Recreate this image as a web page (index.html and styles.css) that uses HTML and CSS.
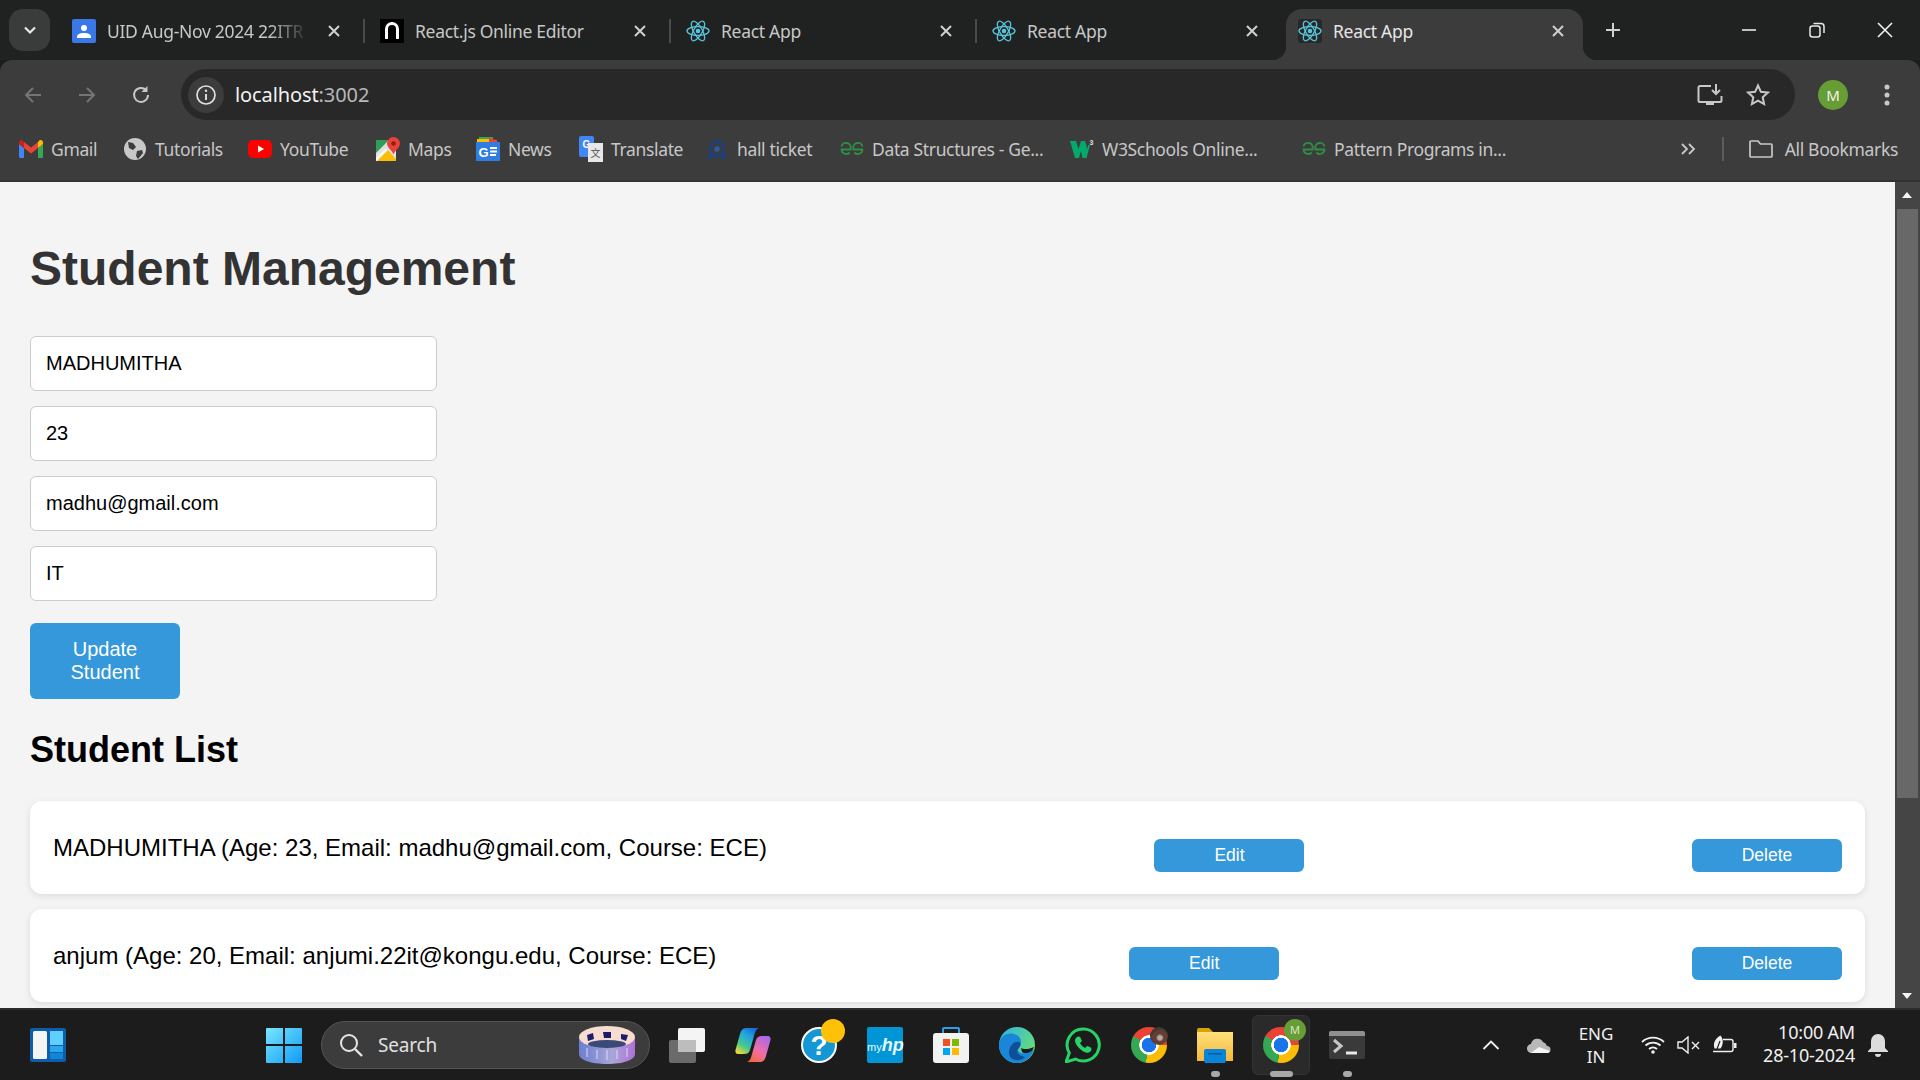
FILE: index.html
```html
<!DOCTYPE html>
<html>
<head>
    <title>React App</title>
    <link rel="stylesheet" href="styles.css">
</head>

<body>
    <!-- shared icons -->
    <svg class="defs" width="0" height="0">
        <symbol id="react" viewBox="0 0 24 24">
            <circle cx="12" cy="12" r="2.3" fill="#58c4dc"/>
            <g fill="none" stroke="#58c4dc" stroke-width="1.3">
                <ellipse cx="12" cy="12" rx="11" ry="4.3"/>
                <ellipse cx="12" cy="12" rx="11" ry="4.3" transform="rotate(60 12 12)"/>
                <ellipse cx="12" cy="12" rx="11" ry="4.3" transform="rotate(120 12 12)"/>
            </g>
        </symbol>
        <symbol id="close" viewBox="0 0 14 14">
            <path d="M2 2l10 10M12 2L2 12" stroke="#d0d0d0" stroke-width="2" fill="none"/>
        </symbol>
        <symbol id="gfg" viewBox="0 0 24 14">
            <path d="M1.5 4.5A4.6 4.6 0 0 1 10.6 6.5v1H1.6a4.6 4.6 0 0 0 8 3M22.5 4.5A4.6 4.6 0 0 0 13.4 6.5v1h9a4.6 4.6 0 0 1-8 3" fill="none" stroke="#2f8d46" stroke-width="1.9"/>
        </symbol>
    </svg>

    <div class="window">
        <div class="tabstrip">
            <button class="tab-search">
                <svg width="16" height="16" viewBox="0 0 16 16"><path d="M3 5.5l5 5 5-5" fill="none" stroke="#e8e8e8" stroke-width="2.2"/></svg>
            </button>
            <div class="tabs">
                <div class="tab sep">
                    <svg class="favicon" viewBox="0 0 24 24"><rect width="24" height="24" rx="2" fill="#3b78e7"/><circle cx="12" cy="9" r="3" fill="#fff"/><path d="M5 19v-1c0-3 3-4 7-4s7 1 7 4v1z" fill="#fff"/></svg>
                    <span class="tab-title fade">UID Aug-Nov 2024 22ITR</span>
                    <svg class="tab-close"><use href="#close"/></svg>
                </div>
                <div class="tab sep">
                    <svg class="favicon" viewBox="0 0 24 24"><rect width="24" height="24" fill="#000"/><path d="M6.5 20V10a5.5 5.5 0 0 1 11 0v10" fill="none" stroke="#fff" stroke-width="3"/></svg>
                    <span class="tab-title">React.js Online Editor</span>
                    <svg class="tab-close"><use href="#close"/></svg>
                </div>
                <div class="tab sep">
                    <svg class="favicon"><use href="#react"/></svg>
                    <span class="tab-title">React App</span>
                    <svg class="tab-close"><use href="#close"/></svg>
                </div>
                <div class="tab">
                    <svg class="favicon"><use href="#react"/></svg>
                    <span class="tab-title">React App</span>
                    <svg class="tab-close"><use href="#close"/></svg>
                </div>
                <div class="tab active">
                    <svg class="favicon dark"><use href="#react"/></svg>
                    <span class="tab-title">React App</span>
                    <svg class="tab-close"><use href="#close"/></svg>
                </div>
            </div>
            <svg class="new-tab" width="18" height="18" viewBox="0 0 18 18"><path d="M9 2v14M2 9h14" stroke="#d0d0d0" stroke-width="2"/></svg>
            <div class="win-controls">
                <svg width="16" height="16" viewBox="0 0 16 16"><path d="M1 8h14" stroke="#e8e8e8" stroke-width="1.6"/></svg>
                <svg width="16" height="16" viewBox="0 0 16 16"><rect x="1" y="4" width="10" height="11" rx="2.5" fill="none" stroke="#e8e8e8" stroke-width="1.5"/><path d="M4.5 1.5H12a3 3 0 0 1 3 3V11" fill="none" stroke="#e8e8e8" stroke-width="1.5"/></svg>
                <svg width="16" height="16" viewBox="0 0 16 16"><path d="M1 1l14 14M15 1L1 15" stroke="#f0f0f0" stroke-width="1.6"/></svg>
            </div>
        </div>

        <div class="toolbar">
            <div class="nav-buttons">
                <svg width="22" height="22" viewBox="0 0 22 22"><path d="M19 11H4M11 4l-7 7 7 7" fill="none" stroke="#757575" stroke-width="2"/></svg>
                <svg width="22" height="22" viewBox="0 0 22 22"><path d="M3 11h15M11 4l7 7-7 7" fill="none" stroke="#757575" stroke-width="2"/></svg>
                <svg width="22" height="22" viewBox="0 0 22 22"><path d="M18 11a7 7 0 1 1-2-5" fill="none" stroke="#c8c8c8" stroke-width="2"/><path d="M17.5 2v6h-6z" fill="#c8c8c8"/></svg>
            </div>
            <div class="omnibox">
                <span class="site-info">
                    <svg width="22" height="22" viewBox="0 0 22 22"><circle cx="11" cy="11" r="9" fill="none" stroke="#e0e0e0" stroke-width="1.7"/><path d="M11 10v6" stroke="#e0e0e0" stroke-width="1.9"/><circle cx="11" cy="6.8" r="1.2" fill="#e0e0e0"/></svg>
                </span>
                <span class="url">localhost<span class="url-port">:3002</span></span>
                <span class="omni-actions">
                    <svg width="26" height="24" viewBox="0 0 26 24"><path d="M14 3H3a1.5 1.5 0 0 0-1.5 1.5v13A1.500 1.500 0 0 0 3 19h20a1.500 1.500 0 0 0 1.500-1.500V13" fill="none" stroke="#c8c8c8" stroke-width="2"/><path d="M9 19h8v3H9z" fill="#c8c8c8"/><path d="M19 1v9M15 7l4 4 4-4" fill="none" stroke="#c8c8c8" stroke-width="2"/></svg>
                    <svg width="24" height="24" viewBox="0 0 24 24"><path d="M12 2.500l2.900 6.300 6.900.8-5.100 4.700 1.400 6.800-6.100-3.400-6.100 3.400 1.400-6.800L2.200 9.600l6.900-.8z" fill="none" stroke="#c8c8c8" stroke-width="2"/></svg>
                </span>
            </div>
            <span class="avatar">M</span>
            <svg class="menu-dots" width="6" height="22" viewBox="0 0 6 22"><circle cx="3" cy="3" r="2.500" fill="#c8c8c8"/><circle cx="3" cy="11" r="2.500" fill="#c8c8c8"/><circle cx="3" cy="19" r="2.500" fill="#c8c8c8"/></svg>
        </div>

        <div class="bookmarks">
            <a class="bm">
                <svg class="bm-icon" viewBox="0 0 24 20"><path d="M1 19h4V9L0 5v12.500A1.500 1.500 0 0 0 1 19z" fill="#4285f4"/><path d="M19 19h4a1 1 0 0 0 1-1.500V5l-5 4z" fill="#34a853"/><path d="M19 3v6l5-4V3.500c0-2-2.200-3-3.700-2z" fill="#fbbc04"/><path d="M5 9V3l7 5.500L19 3v6l-7 5.500z" fill="#ea4335"/><path d="M0 3.500V5l5 4V3L3.700 1.500C2.200.5 0 1.500 0 3.500z" fill="#c5221f"/></svg>
                Gmail
            </a>
            <a class="bm">
                <svg class="bm-icon" viewBox="0 0 24 24"><circle cx="12" cy="12" r="11" fill="#c8c8c8"/><path d="M5 5l5 1 3 4-3 3-4-2zM14 14l5-1 1 3-5 6-2-3z" fill="#3c3c3c"/></svg>
                Tutorials
            </a>
            <a class="bm">
                <svg class="bm-icon" viewBox="0 0 24 20"><rect y="1" width="24" height="18" rx="5" fill="#f00"/><path d="M10 6.500l6 3.500-6 3.500z" fill="#fff"/></svg>
                YouTube
            </a>
            <a class="bm">
                <svg class="bm-icon" viewBox="0 0 24 24"><path d="M0 3h20v21H0z" fill="#dfe3e8"/><path d="M0 3h13L0 16z" fill="#2f9e57"/><path d="M0 20v4h20v-2L10 11z" fill="#fbbc04"/><path d="M0 20l10-9 2 2L1 24H0z" fill="#f6f6f6"/><path d="M17.500 0A6.500 6.500 0 0 1 24 6.500c0 4-4.500 6-6.500 11-2-5-6.500-7-6.500-11A6.500 6.500 0 0 1 17.500 0z" fill="#ea4335"/><circle cx="17.500" cy="6.500" r="2.300" fill="#8e1c14"/></svg>
                Maps
            </a>
            <a class="bm">
                <svg class="bm-icon" viewBox="0 0 24 24"><path d="M3 0h14v5H3z" fill="#34a853"/><path d="M12 1l9 2v3h-9z" fill="#ea4335"/><path d="M1 2h12v4H1z" fill="#fbbc04"/><rect y="5" width="24" height="19" fill="#2f7de1"/><text x="7.500" y="19.500" class="news-g">G</text><path d="M14 11h7M14 14.500h7M14 18h6" stroke="#fff" stroke-width="2"/></svg>
                News
            </a>
            <a class="bm">
                <span class="translate-icon"><span class="translate-g">G</span><span class="translate-zh">文</span></span>
                Translate
            </a>
            <a class="bm">
                <svg class="bm-icon" viewBox="0 0 24 26"><circle cx="12" cy="13" r="7.500" fill="none" stroke="#1d3f7a" stroke-width="3"/><circle cx="12" cy="13" r="3" fill="#2a5aa8"/><path d="M12 1l2 5h-4zM1 21l6-3 2 3-4 4zM23 21l-6-3-2 3 4 4z" fill="#1d3f7a"/></svg>
                hall ticket
            </a>
            <a class="bm">
                <svg class="bm-icon"><use href="#gfg"/></svg>
                Data Structures - Ge...
            </a>
            <a class="bm">
                <svg class="bm-icon" viewBox="0 0 24 20"><path d="M0 2h6l2.500 8L11 2h4l2.500 8L18 6h2l-3.500 13h-4L11 12l-2 7H5z" fill="#04a96d"/><text x="19.500" y="6" class="w3-mark">3</text></svg>
                W3Schools Online...
            </a>
            <a class="bm">
                <svg class="bm-icon"><use href="#gfg"/></svg>
                Pattern Programs in...
            </a>
            <div class="bm-right">
                <svg width="16" height="14" viewBox="0 0 16 14"><path d="M2 2l5 5-5 5M9 2l5 5-5 5" fill="none" stroke="#c8c8c8" stroke-width="1.800"/></svg>
                <span class="bm-divider"></span>
                <a class="bm">
                    <svg class="bm-icon" viewBox="0 0 24 20"><path d="M1 3a1 1 0 0 1 1-1h7l2.500 3H22a1 1 0 0 1 1 1v11a1 1 0 0 1-1 1H2a1 1 0 0 1-1-1z" fill="none" stroke="#c8c8c8" stroke-width="1.700"/></svg>
                    All Bookmarks
                </a>
            </div>
        </div>

        <div class="viewport">
            <div class="page">
                <h1>Student Management</h1>
                <form class="student-form">
                    <input type="text" value="MADHUMITHA">
                    <input type="text" value="23">
                    <input type="text" value="madhu@gmail.com">
                    <input type="text" value="IT">
                    <button type="button" class="btn btn-big">Update Student</button>
                </form>
                <h2>Student List</h2>
                <ul class="student-list">
                    <li>
                        <span>MADHUMITHA (Age: 23, Email: madhu@gmail.com, Course: ECE)</span>
                        <button type="button" class="btn">Edit</button>
                        <button type="button" class="btn">Delete</button>
                    </li>
                    <li>
                        <span>anjum (Age: 20, Email: anjumi.22it@kongu.edu, Course: ECE)</span>
                        <button type="button" class="btn">Edit</button>
                        <button type="button" class="btn">Delete</button>
                    </li>
                    <li></li>
                </ul>
            </div>
            <div class="scrollbar">
                <span class="arrow-up"></span>
                <span class="thumb"></span>
                <span class="arrow-down"></span>
            </div>
        </div>

        <div class="taskbar">
            <svg class="task-icon" viewBox="0 0 36 36"><rect y="1" width="36" height="34" rx="2" fill="#0f5cab"/><rect x="3" y="4" width="14" height="28" rx="1.500" fill="#f4f4f4"/><rect x="20" y="4" width="13" height="14" fill="#5fd0fb"/><rect x="20" y="19" width="13" height="6" fill="#28a8ea"/><rect x="20" y="26" width="13" height="6" fill="#0f86d8"/></svg>
            <svg class="start-icon" viewBox="0 0 36 36"><defs><linearGradient id="win" x1="0" y1="0" x2="1" y2="1"><stop offset="0" stop-color="#78e6ff"/><stop offset="1" stop-color="#0f9bf5"/></linearGradient></defs><path d="M1 1h16v16H0V2a1 1 0 0 1 1-1zM19 1h16a1 1 0 0 1 1 1v15H19zM0 19h17v17H1a1 1 0 0 1-1-1zM19 19h17v16a1 1 0 0 1-1 1H19z" fill="url(#win)"/></svg>
            <div class="search-pill">
                <svg width="24" height="24" viewBox="0 0 24 24"><circle cx="10" cy="10" r="8" fill="none" stroke="#e6e6e6" stroke-width="2"/><path d="M16 16l7 7" stroke="#e6e6e6" stroke-width="2.400"/></svg>
                <span>Search</span>
                <svg class="search-art" viewBox="0 0 56 38"><defs><linearGradient id="drum" x1="0" x2="1"><stop offset="0" stop-color="#6b7fd0"/><stop offset=".6" stop-color="#a9a6d8"/><stop offset="1" stop-color="#b070d8"/></linearGradient></defs><path d="M0 12v16c0 6 12 10 28 10s28-4 28-10V12z" fill="url(#drum)"/><path d="M8 22v9M18 24v9M28 24v10M38 24v9M48 22v9" stroke="#dcdcf0" stroke-width="1"/><ellipse cx="28" cy="11" rx="28" ry="11" fill="#f6ddd0"/><ellipse cx="28" cy="18" rx="19" ry="4" fill="#3a4a78"/><path d="M8 9l6-2 1 6-6 2zM24 6l8 0 0 6-7 0zM42 8l7 1-2 6-5-2z" fill="#1c1c6a"/></svg>
            </div>
            <div class="apps">
                <svg class="task-icon" viewBox="0 0 36 36"><rect x="0" y="13" width="27" height="23" rx="2" fill="#6a6a6a"/><rect x="9" y="1" width="27" height="24" rx="2" fill="#f4f4f4"/><rect x="9" y="13" width="18" height="12" fill="#bdbdbd"/></svg>
                <svg class="task-icon" viewBox="0 0 36 36"><defs><linearGradient id="cpa" x1=".8" y1="0" x2=".2" y2="1"><stop offset="0" stop-color="#1668d8"/><stop offset=".35" stop-color="#22a6e0"/><stop offset=".7" stop-color="#48c88a"/><stop offset="1" stop-color="#f0d83a"/></linearGradient><linearGradient id="cpb" x1=".8" y1="0" x2=".2" y2="1"><stop offset="0" stop-color="#a868e8"/><stop offset=".55" stop-color="#ee70a8"/><stop offset="1" stop-color="#f8683a"/></linearGradient></defs><path d="M11 1H24C21 2 20 5 19 9L15 23C14 26 12 27 9 27H3C1 27 0 25 .5 23L5 7C6 3 8 1 11 1z" fill="url(#cpa)"/><path d="M25 35H12C15 34 16 31 17 27L21 13C22 10 24 9 27 9H33C35 9 36 11 35.500 13L31 29C30 33 28 35 25 35z" fill="url(#cpb)"/></svg>
                <div class="help-icon">
                    <svg class="task-icon" viewBox="0 0 36 36"><circle cx="18" cy="18" r="17" fill="#1497d4" stroke="#fff" stroke-width="2"/><text x="18" y="28" class="help-mark">?</text></svg>
                    <span class="help-dot"></span>
                </div>
                <span class="myhp">my<i>hp</i></span>
                <svg class="task-icon" viewBox="0 0 36 36"><path d="M10 7V2a1 1 0 0 1 1-1h14a1 1 0 0 1 1 1v5" fill="none" stroke="#2aa0e8" stroke-width="2"/><rect y="6" width="36" height="30" rx="3" fill="#f2f2f2"/><rect x="10" y="12" width="7" height="7" fill="#f25022"/><rect x="19" y="12" width="7" height="7" fill="#7fba00"/><rect x="10" y="21" width="7" height="7" fill="#00a4ef"/><rect x="19" y="21" width="7" height="7" fill="#ffb900"/></svg>
                <svg class="task-icon" viewBox="0 0 36 36"><defs><linearGradient id="edge" x1="0" y1="0" x2="1" y2=".6"><stop offset="0" stop-color="#2bb4e8"/><stop offset="1" stop-color="#68dc78"/></linearGradient></defs><circle cx="18" cy="18" r="18" fill="url(#edge)"/><path d="M0 18C0 10 8 5 15 7C22 9 24 15 20 20C17 25 22 27 26 26C30 25 33 24 35 22C33 30 26 36 18 36C8 36 0 28 0 18z" fill="#1a86d8"/><path d="M22 21c3 2 9 1 13-1l-2 4c-3 2-8 3-10 1z" fill="#1c1c1c"/><path d="M10 26C10 19 15 14 20 15C23 17 21 20 19 22C17 26 20 29 26 30C20 36 10 33 10 26z" fill="#0f4f9a"/></svg>
                <svg class="task-icon" viewBox="0 0 36 36"><path d="M18 2A16 16 0 0 0 4.300 26L1 35l9.500-3A16 16 0 1 0 18 2z" fill="none" stroke="#25d366" stroke-width="3"/><path d="M11 11c2-2 4-2 5 1l1 2-2 2c1 2 3 4 5 5l2-2 3 1c2 1 2 3 0 5-3 2-7 0-11-4-4-4-5-8-3-10z" fill="#25d366"/></svg>
                <span class="chrome-icon"><span class="chrome-badge photo"></span></span>
                <div class="app-open">
                    <svg class="task-icon" viewBox="0 0 36 36"><defs><linearGradient id="folder" x1="0" y1="0" x2="0" y2="1"><stop offset="0" stop-color="#ffe07a"/><stop offset="1" stop-color="#f5b93a"/></linearGradient></defs><path d="M0 3a2 2 0 0 1 2-2h10l4 4H0z" fill="#d9a400"/><path d="M0 5h36v29H0z" fill="url(#folder)"/><rect x="7" y="22" width="22" height="14" rx="2" fill="#0a84d8"/><rect x="11" y="26" width="14" height="1.500" fill="#075a9c"/></svg>
                </div>
                <div class="app-open app-active">
                    <span class="chrome-icon"><span class="chrome-badge">M</span></span>
                </div>
                <div class="app-open">
                    <svg class="task-icon" viewBox="0 0 36 36"><rect y="4" width="36" height="28" rx="2" fill="#3a3a3a"/><path d="M2 4h32a2 2 0 0 1 2 2v3H0V6a2 2 0 0 1 2-2z" fill="#8f8f8f"/><path d="M5 13l7 6-7 6" fill="none" stroke="#c8c8c8" stroke-width="3"/><path d="M17 26h11" stroke="#e8e8e8" stroke-width="3"/></svg>
                </div>
            </div>
            <div class="tray">
                <svg width="18" height="10" viewBox="0 0 18 10"><path d="M1.500 9l7.500-7.500L16.500 9" fill="none" stroke="#f0f0f0" stroke-width="1.800"/></svg>
                <svg class="onedrive" width="24" height="16" viewBox="0 0 24 16"><path d="M5 16a4.500 4.500 0 0 1-1-9 6.500 6.500 0 0 1 12-2 5.500 5.500 0 0 1 4 4 3.500 3.500 0 0 1 0 7z" fill="#b8b8b8"/><path d="M4 16l8-6 11 4c-1 1.500-2 2-3 2z" fill="#f4f4f4"/></svg>
                <div class="lang">ENG<br>IN</div>
                <div class="tray-icons">
                    <svg width="24" height="18" viewBox="0 0 24 18"><path d="M1 6a16 16 0 0 1 22 0M4.500 9.500a11 11 0 0 1 15 0M8 13a6 6 0 0 1 8 0" fill="none" stroke="#f0f0f0" stroke-width="1.800"/><circle cx="12" cy="16" r="1.800" fill="#f0f0f0"/></svg>
                    <svg width="24" height="18" viewBox="0 0 24 18"><path d="M1 6h4l6-5v16l-6-5H1z" fill="none" stroke="#f0f0f0" stroke-width="1.400"/><path d="M15 6l7 7M22 6l-7 7" stroke="#f0f0f0" stroke-width="1.400"/></svg>
                    <svg width="24" height="20" viewBox="0 0 24 20"><path d="M10 4.500h8a2 2 0 0 1 2 2v8a2 2 0 0 1-2 2H0" fill="none" stroke="#f0f0f0" stroke-width="1.400"/><path d="M21 8h2.500v5H21z" fill="#f0f0f0"/><path d="M1.500 13.500C-.5 7.500 3 3 7.500.5 10.500 4 10.500 9 7.500 13.500z" fill="#f0f0f0"/><path d="M4 14l3-8" stroke="#1c1c1c" stroke-width="1.200"/></svg>
                </div>
                <div class="clock">10:00 AM<br>28-10-2024</div>
                <svg width="20" height="24" viewBox="0 0 20 24"><path d="M10 1a7 7 0 0 0-7 7v7l-3 3v1h20v-1l-3-3V8a7 7 0 0 0-7-7z" fill="#dcdcdc"/><path d="M7 21h6a3 3 0 0 1-6 0z" fill="#dcdcdc"/></svg>
            </div>
        </div>
    </div>
</body>
</html>
```

FILE: styles.css
```css
* {
    margin: 0;
    padding: 0;
    box-sizing: border-box;
}

html, body {
    height: 100%;
    overflow: hidden;
}

body {
    font-family: "Noto Sans", sans-serif;
    background: #1c1c1c;
}

.defs {
    position: absolute;
}

.window {
    height: 1080px;
    display: flex;
    flex-direction: column;
}

/* tab strip */
.tabstrip {
    height: 60px;
    background: #202221;
    display: flex;
    align-items: flex-end;
    padding-left: 9px;
    flex-shrink: 0;
}
.tab-search {
    width: 41px;
    height: 42px;
    margin-bottom: 9px;
    border: 0;
    border-radius: 14px;
    background: #3a3b3b;
    display: flex;
    align-items: center;
    justify-content: center;
}
.tabs {
    display: flex;
    margin-left: 9px;
}
.tab {
    width: 306px;
    height: 51px;
    position: relative;
    display: flex;
    align-items: center;
    padding: 0 26px 8px 13px;
    color: #c7c7c7;
    font-size: 17.5px;
    letter-spacing: -0.3px;
}
.tab:first-child {
    width: 308px;
}
.tab.sep::after {
    content: '';
    position: absolute;
    right: 2px;
    top: 10px;
    height: 24px;
    width: 2px;
    background: #4a4a4a;
}
.tab.active {
    background: #3c3c3c;
    border-radius: 16px 16px 0 0;
    width: 297px;
    margin-left: 1px;
    color: #e6e6e6;
    padding-left: 12px;
    padding-right: 18px;
}
.tab.active::before, .tab.active::after {
    content: '';
    position: absolute;
    bottom: 0;
    width: 14px;
    height: 14px;
}
.tab.active::before {
    left: -14px;
    background: radial-gradient(circle at 0 0, #202221 14px, #3c3c3c 14.5px);
}
.tab.active::after {
    right: -14px;
    background: radial-gradient(circle at 100% 0, #202221 14px, #3c3c3c 14.5px);
}
.favicon {
    width: 24px;
    height: 24px;
    flex-shrink: 0;
}
.favicon.dark {
    background: #282828;
    border-radius: 3px;
}
.tab-title {
    margin-left: 11px;
    flex: 1;
    white-space: nowrap;
    overflow: hidden;
}
.tab-title.fade {
    margin-right: 18px;
    -webkit-mask-image: linear-gradient(90deg, #000 80%, transparent);
    mask-image: linear-gradient(90deg, #000 80%, transparent);
}
.tab-close {
    width: 14px;
    height: 14px;
    flex-shrink: 0;
}
.new-tab {
    margin: 0 0 21px 21px;
}
.win-controls {
    margin-left: auto;
    width: 179px;
    height: 60px;
    padding: 22px 27px 0 0;
    display: flex;
    justify-content: space-between;
}

/* toolbar */
.toolbar {
    height: 60px;
    background: #3c3c3c;
    border-radius: 12px 12px 0 0;
    display: flex;
    align-items: flex-start;
    padding-top: 9px;
    flex-shrink: 0;
}
.nav-buttons {
    width: 181px;
    height: 51px;
    padding-left: 22px;
    display: flex;
    align-items: center;
    gap: 32px;
}
.omnibox {
    width: 1614px;
    height: 51px;
    background: #282828;
    border-radius: 26px;
    display: flex;
    align-items: center;
    padding: 0 25px 0 7px;
}
.site-info {
    width: 36px;
    height: 36px;
    background: #3c3c3c;
    border-radius: 50%;
    display: flex;
    align-items: center;
    justify-content: center;
}
.url {
    margin-left: 11px;
    font-size: 20px;
    letter-spacing: -0.1px;
    color: #f2f2f2;
}
.url-port {
    color: #b8b8b8;
}
.omni-actions {
    margin-left: auto;
    display: flex;
    align-items: center;
    gap: 23px;
}
.avatar {
    margin: 11px 0 0 23px;
    width: 30px;
    height: 30px;
    border-radius: 50%;
    background: #669d34;
    color: #f0f0f0;
    font-size: 15px;
    display: flex;
    align-items: center;
    justify-content: center;
}
.menu-dots {
    margin: 15px 0 0 36px;
}

/* bookmarks */
.bookmarks {
    height: 62px;
    padding: 0 0 2px 19px;
    background: #3c3c3c;
    border-bottom: 2px solid #333;
    display: grid;
    grid-template-columns: 104px 125px 128px 100px 103px 126px 135px 230px 232px 1fr auto;
    align-items: center;
    flex-shrink: 0;
    color: #c7c7c7;
    font-size: 17.5px;
    letter-spacing: -0.35px;
}
.bm {
    display: flex;
    align-items: center;
    gap: 8px;
    white-space: nowrap;
}
.bm-icon {
    width: 24px;
    height: 24px;
    flex-shrink: 0;
}
.news-g {
    font: bold 13px "Liberation Sans", sans-serif;
    fill: #fff;
    text-anchor: middle;
}
.translate-icon {
    width: 24px;
    height: 26px;
    position: relative;
    display: block;
}
.translate-g {
    width: 15px;
    height: 21px;
    background: #4285f4;
    border-radius: 2px;
    color: #fff;
    font: bold 10px/17px "Liberation Sans", sans-serif;
    letter-spacing: 0;
    text-align: center;
    position: absolute;
    left: 0;
    top: 0;
}
.translate-zh {
    width: 15px;
    height: 19px;
    background: #e8e8e8;
    color: #555;
    font: 10px/19px "Noto Sans CJK SC", sans-serif;
    letter-spacing: 0;
    text-align: center;
    position: absolute;
    right: 0;
    bottom: 0;
}
.w3-mark {
    font: bold 7px "Liberation Sans", sans-serif;
    fill: #e0e0e0;
}
.bm-right {
    display: flex;
    align-items: center;
    padding-right: 22px;
}
.bm-right .bm {
    gap: 12px;
}
.bm-divider {
    width: 2px;
    height: 24px;
    background: #5c5c5c;
    margin: 0 25px 0 26px;
}

/* the page itself */
.viewport {
    flex: 1;
    min-height: 0;
    display: flex;
    border-bottom: 2px solid #2c2c2c;
}
.page {
    flex: 1;
    min-width: 0;
    overflow: hidden;
    background: #f4f4f4;
    padding: 0 30px;
    font-family: "Liberation Sans", Arial, sans-serif;
}
.page h1 {
    margin-top: 58px;
    margin-bottom: 38px;
    font-size: 48px;
    line-height: 58px;
    color: #333;
}
.student-form {
    display: flex;
    flex-direction: column;
    align-items: flex-start;
}
.student-form input {
    width: 407px;
    height: 55px;
    margin-bottom: 15px;
    padding: 0 15px;
    border: 1px solid #ccc;
    border-radius: 6px;
    background: #fff;
    font: 20px "Liberation Sans", Arial, sans-serif;
    color: #000;
}
.btn {
    width: 150px;
    height: 33px;
    border: 0;
    border-radius: 6px;
    background: #3498db;
    color: #fff;
    font: 17.5px "Liberation Sans", Arial, sans-serif;
}
.btn-big {
    height: 76px;
    margin-top: 7px;
    padding: 0 25px;
    font-size: 20px;
    line-height: 23px;
}
.page h2 {
    margin: 29px 0 30px;
    font-size: 36px;
    line-height: 43px;
    color: #000;
}
.student-list {
    list-style: none;
}
.student-list li {
    height: 93px;
    margin-bottom: 15px;
    padding: 0 23px;
    background: #fff;
    border-radius: 12px;
    box-shadow: 0 2px 7px rgba(0, 0, 0, 0.1);
    display: flex;
    align-items: center;
    justify-content: space-between;
    font-size: 24px;
    color: #000;
}
.student-list .btn {
    margin-top: 16px;
}

.scrollbar {
    width: 25px;
    background: #454545;
    padding-top: 27px;
    position: relative;
    flex-shrink: 0;
}
.thumb {
    display: block;
    width: 21px;
    height: 589px;
    margin-left: 2px;
    background: #686868;
}
.arrow-up, .arrow-down {
    position: absolute;
    left: 7px;
    width: 0;
    height: 0;
    border-left: 5.5px solid transparent;
    border-right: 5.5px solid transparent;
}
.arrow-up {
    top: 10px;
    border-bottom: 6px solid #f4f4f4;
}
.arrow-down {
    bottom: 9px;
    border-top: 6px solid #f4f4f4;
}

/* taskbar */
.taskbar {
    height: 70px;
    background: #1c1c1c;
    display: flex;
    align-items: center;
    padding-left: 30px;
    flex-shrink: 0;
}
.task-icon {
    width: 36px;
    height: 36px;
    display: block;
    flex-shrink: 0;
}
.start-icon {
    width: 36px;
    height: 36px;
    margin-left: 200px;
}
.search-pill {
    width: 329px;
    height: 48px;
    margin-left: 19px;
    padding: 0 14px 0 17px;
    border: 1px solid #555;
    border-radius: 24px;
    background: #3c3c3c;
    display: flex;
    align-items: center;
    color: #e0e0e0;
    font-size: 19px;
    letter-spacing: -0.2px;
}
.search-pill span {
    margin-left: 15px;
}
.search-art {
    width: 56px;
    height: 38px;
    margin-left: auto;
}
.apps {
    display: flex;
    align-items: center;
    gap: 30px;
    margin-left: 19px;
}
.help-icon {
    position: relative;
}
.help-mark {
    font: bold 28px "Liberation Sans", sans-serif;
    fill: #fff;
    text-anchor: middle;
}
.help-dot {
    position: absolute;
    right: -8px;
    top: -8px;
    width: 24px;
    height: 24px;
    border-radius: 50%;
    background: #ffc107;
}
.myhp {
    width: 36px;
    height: 36px;
    background: #0096d6;
    border-radius: 2px;
    color: #e8f6fc;
    font: 11px/36px "Liberation Sans", sans-serif;
    text-align: center;
    white-space: nowrap;
}
.myhp i {
    font-size: 18px;
    font-weight: bold;
}
.chrome-icon {
    display: block;
    width: 36px;
    height: 36px;
    border-radius: 50%;
    position: relative;
    background:
        radial-gradient(circle, #1a73e8 0 7px, #fff 7.5px 9.5px, transparent 10px),
        conic-gradient(from -60deg, #ea4335 0 150deg, #fbbc04 150deg 250deg, #34a853 250deg 360deg);
}
.chrome-badge {
    position: absolute;
    right: -7px;
    top: -8px;
    width: 22px;
    height: 22px;
    border-radius: 50%;
    background: #669d34;
    color: #d8e6c8;
    font: 11px/22px "Noto Sans", sans-serif;
    text-align: center;
}
.chrome-badge.photo {
    right: -1px;
    top: 0;
    width: 18px;
    height: 18px;
    background: radial-gradient(circle at 55% 60%, #b8a8a0 0 2px, #5a4038 4px, #6e3a30 7px, #3c3a34 9px);
}
.app-open {
    position: relative;
}
.app-open::after {
    content: '';
    position: absolute;
    left: 14px;
    bottom: -14px;
    width: 9px;
    height: 6px;
    border-radius: 3px;
    background: #a8a8a8;
}
.app-active::before {
    content: '';
    position: absolute;
    left: -11px;
    right: -11px;
    top: -12px;
    bottom: -12px;
    background: #2a2a2a;
    border-radius: 6px;
    border: 1px solid #333;
}
.app-active::after {
    left: 7px;
    width: 23px;
}
.app-active .chrome-icon {
    z-index: 1;
}
.tray {
    margin-left: auto;
    padding-right: 32px;
    display: flex;
    align-items: center;
    color: #f0f0f0;
}
.onedrive {
    margin-left: 27px;
}
.lang {
    width: 44px;
    margin-left: 23px;
    text-align: center;
    font-size: 17px;
    line-height: 23px;
}
.tray-icons {
    display: flex;
    align-items: center;
    gap: 12px;
    margin-left: 23px;
}
.clock {
    width: 116px;
    margin: 0 0 3px 2px;
    text-align: right;
    font-size: 18px;
    line-height: 23px;
    letter-spacing: -0.2px;
}
.tray > svg:last-child {
    margin-left: 13px;
}
```
